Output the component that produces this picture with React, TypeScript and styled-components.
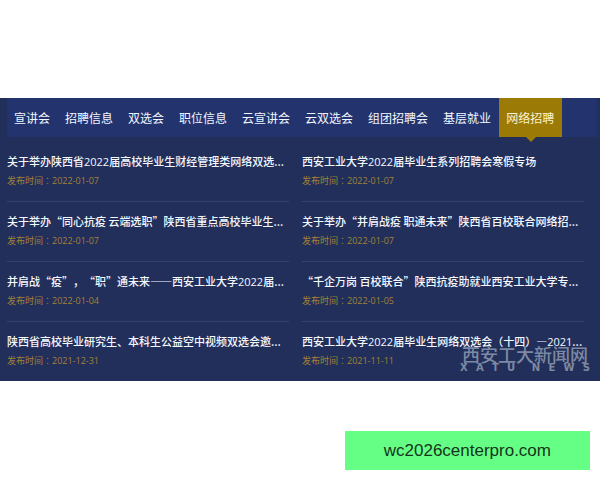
import React, { useState } from "react";
import styled, { createGlobalStyle } from "styled-components";

const GlobalStyle = createGlobalStyle`
  * { box-sizing: border-box; }
  body {
    margin: 0;
    background: #ffffff;
    font-family: "Noto Sans CJK SC", sans-serif;
    text-spacing-trim: space-all;
  }
`;

const Page = styled.div`
  padding: 98px 0 10px;
`;

const Panel = styled.main`
  position: relative;
  background: #222f5a;
`;

const TabBar = styled.nav`
  display: flex;
  height: 39px;
  margin: 0 3px 0 7px;
  background: #22336d;
`;

const Tab = styled.button<{ $active: boolean }>`
  position: relative;
  flex: none;
  padding: 0 8px 0 7px;
  border: 0;
  background: ${(p) => (p.$active ? "#9b7a05" : "transparent")};
  color: ${(p) => (p.$active ? "#fbf3d0" : "#f2f6ff")};
  font-family: inherit;
  font-size: 12px;
  line-height: 16px;
  white-space: nowrap;
  cursor: pointer;

  &::after {
    content: "";
    display: ${(p) => (p.$active ? "block" : "none")};
    position: absolute;
    top: 100%;
    left: 50%;
    margin-left: -5px;
    border: 5px solid transparent;
    border-top-color: #9b7a05;
    border-bottom: 0;
  }
`;

const NewsGrid = styled.ul`
  display: grid;
  grid-template-columns: minmax(0, 1fr) minmax(0, 1fr);
  column-gap: 13px;
  margin: 0;
  padding: 5px 16px 0 7px;
  list-style: none;
`;

const NewsItem = styled.li`
  padding: 11px 0 13px;
  border-bottom: 1px solid #34416d;

  &:nth-last-child(-n + 2) {
    border-bottom: 0;
  }
`;

const NewsLink = styled.a`
  display: block;
  color: #f4f8ff;
  font-size: 11px;
  font-weight: 500;
  line-height: 16px;
  text-decoration: none;
  white-space: nowrap;
`;

const Digits = styled.span`
  font-family: "Open Sans", sans-serif;
  line-height: 1;
`;

const NewsDate = styled.div`
  margin-top: 5px;
  color: #a38236;
  font-size: 9px;
  line-height: 14px;
`;

const Colon = styled.span`
  font-family: "Noto Sans CJK JP", sans-serif;
  line-height: 1;
`;

const Watermark = styled.div`
  position: absolute;
  right: 10px;
  bottom: 8px;
  width: 130px;
  color: #7d89a3;
  pointer-events: none;
`;

const WatermarkName = styled.div`
  font-size: 18px;
  font-weight: 500;
  line-height: 18px;
  text-align: center;
`;

const WatermarkLatin = styled.div`
  display: flex;
  justify-content: space-between;
  font-family: "DejaVu Sans", sans-serif;
  font-size: 10px;
  font-weight: 700;
  line-height: 10px;
`;

const SiteLink = styled.a`
  display: block;
  width: fit-content;
  margin: 50px 10px 0 auto;
  padding: 0 39px;
  background: #66ff85;
  color: #14351b;
  font-family: "Liberation Sans", sans-serif;
  font-size: 17px;
  line-height: 39px;
  text-decoration: none;
`;

const tabs = ["宣讲会", "招聘信息", "双选会", "职位信息", "云宣讲会", "云双选会", "组团招聘会", "基层就业", "网络招聘"];

const news = [
  { title: "关于举办陕西省2022届高校毕业生财经管理类网络双选...", date: "2022-01-07" },
  { title: "西安工业大学2022届毕业生系列招聘会寒假专场", date: "2022-01-07" },
  { title: "关于举办“同心抗疫 云端选职”陕西省重点高校毕业生...", date: "2022-01-07" },
  { title: "关于举办“并肩战疫 职通未来”陕西省百校联合网络招...", date: "2022-01-07" },
  { title: "并肩战“疫”，“职”通未来——西安工业大学2022届...", date: "2022-01-04" },
  { title: "“千企万岗 百校联合”陕西抗疫助就业西安工业大学专...", date: "2022-01-05" },
  { title: "陕西省高校毕业研究生、本科生公益空中视频双选会邀...", date: "2021-12-31" },
  { title: "西安工业大学2022届毕业生网络双选会（十四）—2021...", date: "2021-11-11" },
];

function Title({ text }: { text: string }) {
  return (
    <>
      {text.split(/(\d+)/).map((part, i) => (i % 2 ? <Digits key={i}>{part}</Digits> : part))}
    </>
  );
}

export default function App() {
  const [active, setActive] = useState("网络招聘");
  return (
    <Page lang="zh-CN">
      <GlobalStyle />
      <Panel>
        <TabBar>
          {tabs.map((tab) => (
            <Tab key={tab} type="button" $active={tab === active} onClick={() => setActive(tab)}>
              {tab}
            </Tab>
          ))}
        </TabBar>
        <NewsGrid>
          {news.map((item) => (
            <NewsItem key={item.title}>
              <NewsLink href="#">
                <Title text={item.title} />
              </NewsLink>
              <NewsDate>
                发布时间<Colon lang="ja">：</Colon>
                <Digits as="time" dateTime={item.date}>{item.date}</Digits>
              </NewsDate>
            </NewsItem>
          ))}
        </NewsGrid>
        <Watermark>
          <WatermarkName>西安工大新闻网</WatermarkName>
          <WatermarkLatin>
            {Array.from("XATU NEWS").map((letter, i) => (
              <span key={i}>{letter}</span>
            ))}
          </WatermarkLatin>
        </Watermark>
      </Panel>
      <SiteLink href="#">wc2026centerpro.com</SiteLink>
    </Page>
  );
}
